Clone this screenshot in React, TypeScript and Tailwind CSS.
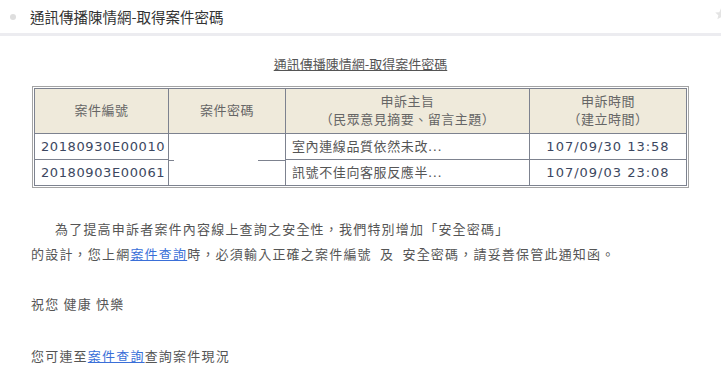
import React from 'react'

const ROWS = [
  { no: '20180930E00010', subject: '室內連線品質依然未改...', time: '107/09/30 13:58' },
  { no: '20180903E00061', subject: '訊號不佳向客服反應半...', time: '107/09/03 23:08' },
]

export default function App() {
  return (
    <div className="w-[721px] min-h-[372px] bg-white overflow-hidden font-['Noto_Sans_CJK_TC',sans-serif]">
      {/* Header */}
      <div className="flex items-center justify-between h-[33px] pl-[10px] overflow-hidden">
        <div className="flex items-center gap-[14px]">
          <span className="w-[6px] h-[6px] rounded-full bg-[#dedede]" />
          <span className="text-[14.5px] leading-[20px] text-[#333]">通訊傳播陳情網-取得案件密碼</span>
        </div>
        <svg width="14" height="14" viewBox="0 0 24 24" className="-mr-[7px] -mt-[6px]">
          <path d="M12 2l2.9 6.9 7.1.6-5.4 4.7 1.6 7-6.2-3.8-6.2 3.8 1.6-7L2 9.5l7.1-.6z" fill="#e4e4e4" />
        </svg>
      </div>
      <div className="h-[3px] bg-[#ececf0]" />

      {/* Title link */}
      <div className="mt-[14px] text-center">
        <a className="text-[13px] leading-[20px] text-[#555] underline">通訊傳播陳情網-取得案件密碼</a>
      </div>

      {/* Table */}
      <div className="mt-[12px] mx-auto w-[657px] border border-[#a4a4a4] p-[1px]">
        <table className="w-full border-collapse text-[13px] font-['DejaVu_Sans','Noto_Sans_CJK_TC',sans-serif]">
          <thead>
            <tr className="bg-[#efeadb] text-[#666] tracking-[0.5px] leading-[18px]">
              <th className="w-[134px] h-[45px] border border-[#7d828f] font-normal">案件編號</th>
              <th className="w-[117px] border border-[#7d828f] font-normal">案件密碼</th>
              <th className="w-[244px] border border-[#7d828f] font-normal">申訴主旨<br />（民眾意見摘要、留言主題）</th>
              <th className="border border-[#7d828f] font-normal">申訴時間<br />（建立時間）</th>
            </tr>
          </thead>
          <tbody className="text-[#3c4760] leading-[18px]">
            {ROWS.map((r, i) => (
              <tr key={r.no}>
                <td className="h-[26px] border border-[#7d828f] pl-[6px] tracking-[0.6px]">{r.no}</td>
                {i === 0 ? (
                  <td className="border border-[#7d828f] border-b-0 p-0 align-bottom">
                    <div className="flex h-px -mb-px">
                      <div className="w-[5px] bg-[#7d828f]" />
                      <div className="flex-1" />
                      <div className="w-[27px] bg-[#7d828f]" />
                    </div>
                  </td>
                ) : (
                  <td className="border border-[#7d828f] border-t-0" />
                )}
                <td className="border border-[#7d828f] pl-[6px] tracking-[0.6px] text-[#555]">{r.subject}</td>
                <td className="border border-[#7d828f] text-center tracking-[1px]">{r.time}</td>
              </tr>
            ))}
          </tbody>
        </table>
      </div>

      {/* Body */}
      <div className="mt-[28px] px-[31px] text-[13px] tracking-[1.2px] leading-[25px] text-[#555]">
        <p className="indent-[24px]">
          為了提高申訴者案件內容線上查詢之安全性，我們特別增加「安全密碼」<br />
          的設計，您上網<a className="text-[#3a6fd8] underline">案件查詢</a>時，必須輸入正確之案件編號&nbsp; 及&nbsp; 安全密碼，請妥善保管此通知函。
        </p>
        <p className="mt-[25px]">祝您 健康 快樂</p>
        <p className="mt-[27px]">
          您可連至<a className="text-[#3a6fd8] underline">案件查詢</a>查詢案件現況
        </p>
      </div>
    </div>
  )
}
